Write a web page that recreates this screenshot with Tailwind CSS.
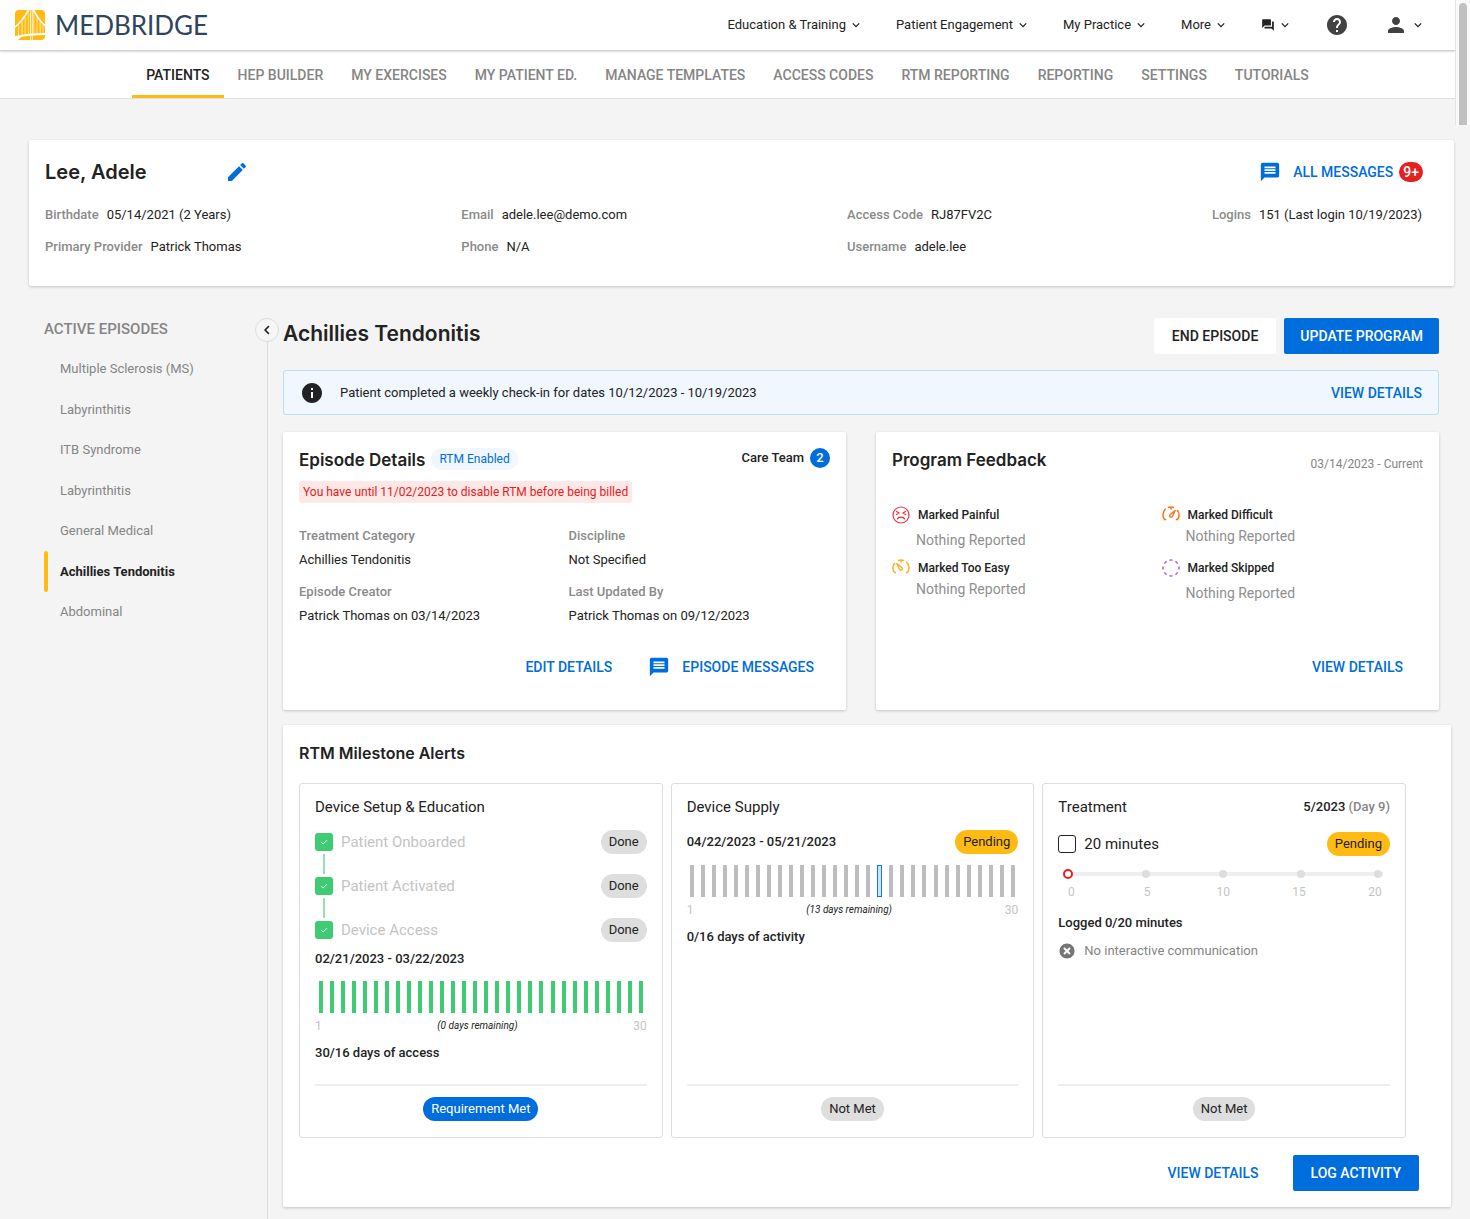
<!DOCTYPE html>
<html lang="en">
<head>
  <meta charset="UTF-8" />
  <meta name="viewport" content="width=device-width, initial-scale=1.0"/>
  <title>MedBridge - Lee, Adele</title>
  <script src="https://cdn.jsdelivr.net/npm/@tailwindcss/browser@4"></script>
</head>
<body class="relative min-h-screen bg-[#f4f4f4] font-[Roboto,sans-serif] text-[13px] text-[#222]">
  <!-- Shared icons -->
  <svg class="hidden">
    <symbol id="chevron" viewBox="0 0 10 10"><path d="M1.8 3.4 5 6.6l3.2-3.2" fill="none" stroke="currentColor" stroke-width="1.3"/></symbol>
    <symbol id="message" viewBox="0 0 24 24"><path fill="currentColor" d="M20 2H4c-1.1 0-2 .9-2 2v18l4-4h14c1.1 0 2-.9 2-2V4c0-1.100-.9-2-2-2zm-2 12H6v-2h12v2zm0-3H6V9h12v2zm0-3H6V6h12v2z"/></symbol>
    <symbol id="check" viewBox="0 0 10 10"><path d="M1.500 5.200 4 7.500 8.700 2.700" fill="none" stroke="#fff" stroke-width="1.200"/></symbol>
  </svg>

  <!-- Scrollbar -->
  <div class="absolute top-0 right-0 h-[125px] w-[15px] border-l border-[#e4e4e4] bg-[#fafafa] pt-[3px] pl-[3px]">
    <div class="h-full w-2 rounded-t-full bg-[#c1c1c1]"></div>
  </div>

  <div class="mr-[15px] bg-white">
    <header class="flex h-[51px] items-center justify-between border-b border-[#cfcfcf] pr-8 pl-[15px] shadow-[0_1px_2px_rgba(0,0,0,0.15)]">
      <a href="#" class="flex items-center gap-[10px] font-[Lato,sans-serif] text-[26px] leading-[30px] text-[#30455c]">
        <svg class="size-[30px]" viewBox="0 0 30 30">
          <path fill="#ffbb12" d="M4 0h22a4 4 0 0 1 4 4v22a4 4 0 0 1-4 4H4a4 4 0 0 1-4-4V4a4 4 0 0 1 4-4z"/>
          <g fill="none" stroke="#fff">
            <path stroke-width="1.600" d="M-.5 17.500C5 13 10 7 13.500-.5M18.500-.5C22 7 25.500 12 30.500 16"/>
            <path stroke-width="2" d="M-.5 27.200C9 25 20 23.900 30.500 23.900"/>
            <path stroke-width=".6" d="M3.500 14.500v11.500M7 11v14.500M10.200 7v18M13.400 1v24M18.800 1v23.500M22 7v17M25.200 11v13M28 14v10"/>
            <path stroke-width=".8" d="M15.500 0v30M17.300 0v30"/>
          </g>
          <path fill="#fff" d="M0 27.500l7-1.200L3 30H0z"/>
        </svg>
        MEDBRIDGE
      </a>
      <nav class="flex items-center gap-[35px]">
        <button class="flex items-center gap-[5px]">Education &amp; Training <svg class="size-[10px]"><use href="#chevron"/></svg></button>
        <button class="flex items-center gap-[5px]">Patient Engagement <svg class="size-[10px]"><use href="#chevron"/></svg></button>
        <button class="flex items-center gap-[5px]">My Practice <svg class="size-[10px]"><use href="#chevron"/></svg></button>
        <button class="flex items-center gap-[5px]">More <svg class="size-[10px]"><use href="#chevron"/></svg></button>
        <button class="flex items-center gap-[5px]" aria-label="Chats">
          <svg class="size-[14px]" viewBox="0 0 24 24"><path fill="#222" d="M21 6h-2v9H6v2c0 .55.45 1 1 1h11l4 4V7c0-.55-.45-1-1-1zm-4 6V3c0-.55-.45-1-1-1H3c-.55 0-1 .45-1 1v14l4-4h10c.55 0 1-.45 1-1z"/></svg>
          <svg class="size-[10px]"><use href="#chevron"/></svg>
        </button>
        <button aria-label="Help">
          <svg class="size-6" viewBox="0 0 24 24"><path fill="#424242" d="M12 2C6.480 2 2 6.480 2 12s4.480 10 10 10 10-4.480 10-10S17.520 2 12 2zm1 17h-2v-2h2v2zm2.070-7.750-.9.920C13.450 12.900 13 13.500 13 15h-2v-.5c0-1.100.45-2.100 1.170-2.830l1.240-1.260c.37-.36.59-.86.59-1.410 0-1.100-.9-2-2-2s-2 .9-2 2H8c0-2.210 1.790-4 4-4s4 1.790 4 4c0 .88-.36 1.680-.93 2.250z"/></svg>
        </button>
        <button class="flex items-center gap-[5px]" aria-label="Account">
          <svg class="size-6" viewBox="0 0 24 24"><path fill="#424242" d="M12 12c2.210 0 4-1.790 4-4s-1.790-4-4-4-4 1.790-4 4 1.790 4 4 4zm0 2c-2.670 0-8 1.340-8 4v2h16v-2c0-2.660-5.330-4-8-4z"/></svg>
          <svg class="size-[10px]"><use href="#chevron"/></svg>
        </button>
      </nav>
    </header>

    <nav class="flex h-12 justify-center border-b border-[#e0e0e0] text-sm font-medium text-[#858585]">
      <a href="#" class="flex items-center border-b-3 border-[#ffbb12] px-[14px] pt-[3px] text-[#222]">PATIENTS</a>
      <a href="#" class="flex items-center px-[14px]">HEP BUILDER</a>
      <a href="#" class="flex items-center px-[14px]">MY EXERCISES</a>
      <a href="#" class="flex items-center px-[14px]">MY PATIENT ED.</a>
      <a href="#" class="flex items-center px-[14px]">MANAGE TEMPLATES</a>
      <a href="#" class="flex items-center px-[14px]">ACCESS CODES</a>
      <a href="#" class="flex items-center px-[14px]">RTM REPORTING</a>
      <a href="#" class="flex items-center px-[14px]">REPORTING</a>
      <a href="#" class="flex items-center px-[14px]">SETTINGS</a>
      <a href="#" class="flex items-center px-[14px]">TUTORIALS</a>
    </nav>
  </div>

  <div class="pt-[41px] pr-4 pl-[29px]">
    <!-- Patient card -->
    <section class="rounded-xs bg-white px-4 pt-4 pb-[27px] shadow-[0_1px_3px_rgba(0,0,0,0.2)]">
      <div class="flex h-8 items-center justify-between pr-[15px]">
        <div class="flex items-center">
          <h1 class="w-[180px] font-[Inter,sans-serif] text-xl font-semibold">Lee, Adele</h1>
          <button aria-label="Edit patient" class="text-[#006ddc]">
            <svg class="size-6" viewBox="0 0 24 24"><path fill="currentColor" d="M3 17.250V21h3.750L17.810 9.940l-3.750-3.750L3 17.250zM20.710 7.040c.39-.39.39-1.020 0-1.410l-2.340-2.340c-.39-.39-1.020-.39-1.410 0l-1.830 1.830 3.750 3.750 1.830-1.830z"/></svg>
          </button>
        </div>
        <a href="#" class="flex items-center text-sm font-medium text-[#006ddc]">
          <svg class="mr-3 size-[22px]"><use href="#message"/></svg>
          ALL MESSAGES
          <span class="ml-[6px] rounded-full bg-[#e52020] px-1 leading-5 text-white">9+</span>
        </a>
      </div>
      <div class="mt-[15px] flex justify-between pr-4 leading-6">
        <div class="flex flex-col gap-2">
          <p><span class="mr-2 font-medium text-[#8a8a8a]">Birthdate</span>05/14/2021 (2 Years)</p>
          <p><span class="mr-2 font-medium text-[#8a8a8a]">Primary Provider</span>Patrick Thomas</p>
        </div>
        <div class="flex flex-col gap-2">
          <p><span class="mr-2 font-medium text-[#8a8a8a]">Email</span>adele.lee@demo.com</p>
          <p><span class="mr-2 font-medium text-[#8a8a8a]">Phone</span>N/A</p>
        </div>
        <div class="flex flex-col gap-2">
          <p><span class="mr-2 font-medium text-[#8a8a8a]">Access Code</span>RJ87FV2C</p>
          <p><span class="mr-2 font-medium text-[#8a8a8a]">Username</span>adele.lee</p>
        </div>
        <div>
          <p><span class="mr-2 font-medium text-[#8a8a8a]">Logins</span>151 (Last login 10/19/2023)</p>
        </div>
      </div>
    </section>

    <div class="mt-8 flex pr-[3px]">
      <!-- Episode list -->
      <aside class="w-[226px] pl-[15px] text-[#858585]">
        <h2 class="text-[15px] leading-[22px] font-medium">ACTIVE EPISODES</h2>
        <ul class="mt-[9px] grid h-[283px] auto-rows-fr">
          <li class="flex items-center pl-4"><a href="#">Multiple Sclerosis (MS)</a></li>
          <li class="flex items-center pl-4"><a href="#">Labyrinthitis</a></li>
          <li class="flex items-center pl-4"><a href="#">ITB Syndrome</a></li>
          <li class="flex items-center pl-4"><a href="#">Labyrinthitis</a></li>
          <li class="flex items-center pl-4"><a href="#">General Medical</a></li>
          <li class="flex items-center gap-3 font-bold text-[#222]"><span class="h-full w-1 rounded-full bg-[#ffbb12]"></span><a href="#">Achillies Tendonitis</a></li>
          <li class="flex items-center pl-4"><a href="#">Abdominal</a></li>
        </ul>
      </aside>
      <div class="flex flex-col items-center">
        <button aria-label="Collapse episodes" class="grid size-6 place-items-center rounded-full border border-[#ddd] bg-[#f6f6f6]">
          <svg class="size-3 rotate-90"><use href="#chevron"/></svg>
        </button>
        <div class="w-px flex-1 bg-[#ddd]"></div>
      </div>

      <main class="min-w-0 flex-1 pb-3 pl-1">
        <div class="mr-3">
          <div class="flex justify-between">
            <h2 class="font-[Inter,sans-serif] text-[21px] leading-8 font-semibold">Achillies Tendonitis</h2>
            <div class="flex gap-2 text-sm font-medium">
              <button class="h-9 rounded-xs bg-white px-[18px]">END EPISODE</button>
              <button class="h-9 rounded-xs bg-[#006ddc] px-4 text-white">UPDATE PROGRAM</button>
            </div>
          </div>

          <div class="mt-4 flex h-[45px] items-center rounded-[3px] border border-[#b8defc] bg-[#f0f7fe] px-4">
            <svg class="mr-4 size-6" viewBox="0 0 24 24"><path fill="#222" d="M12 2C6.480 2 2 6.480 2 12s4.480 10 10 10 10-4.480 10-10S17.520 2 12 2zm1 15h-2v-6h2v6zm0-8h-2V7h2v2z"/></svg>
            <p class="flex-1">Patient completed a weekly check-in for dates 10/12/2023 - 10/19/2023</p>
            <a href="#" class="text-sm font-medium text-[#006ddc]">VIEW DETAILS</a>
          </div>

          <div class="mt-[17px] grid grid-cols-2 gap-[30px]">
            <section class="rounded-xs bg-white px-4 pt-4 pb-[25px] shadow-[0_1px_3px_rgba(0,0,0,0.2)]">
              <div class="flex h-6 items-start justify-between">
                <div class="flex gap-[6px]">
                  <h3 class="font-[Inter,sans-serif] text-[17px] leading-6 font-semibold">Episode Details</h3>
                  <span class="h-[22px] rounded-full bg-[#f0f7fe] px-2 text-xs leading-[22px] text-[#006ddc]">RTM Enabled</span>
                </div>
                <div class="flex items-center gap-[6px] font-medium">Care Team <span class="size-5 rounded-full bg-[#006ddc] text-center leading-5 text-white">2</span></div>
              </div>
              <p class="mt-[9px] w-fit rounded-[3px] bg-[#fce8e7] px-1 text-xs leading-[22px] text-[#e52020]">You have until 11/02/2023 to disable RTM before being billed</p>
              <dl class="mt-[21px] grid grid-cols-2 gap-2 leading-6">
                <div><dt class="font-medium text-[#8a8a8a]">Treatment Category</dt><dd>Achillies Tendonitis</dd></div>
                <div><dt class="font-medium text-[#8a8a8a]">Discipline</dt><dd>Not Specified</dd></div>
                <div><dt class="font-medium text-[#8a8a8a]">Episode Creator</dt><dd>Patrick Thomas on 03/14/2023</dd></div>
                <div><dt class="font-medium text-[#8a8a8a]">Last Updated By</dt><dd>Patrick Thomas on 09/12/2023</dd></div>
              </dl>
              <div class="mt-[21px] flex h-9 items-center justify-end gap-9 pr-4 text-sm font-medium text-[#006ddc]">
                <a href="#">EDIT DETAILS</a>
                <a href="#" class="flex items-center gap-3"><svg class="size-[22px]"><use href="#message"/></svg>EPISODE MESSAGES</a>
              </div>
            </section>

            <section class="flex flex-col rounded-xs bg-white px-4 pt-4 pb-[25px] shadow-[0_1px_3px_rgba(0,0,0,0.2)]">
              <div class="flex h-6 justify-between">
                <h3 class="font-[Inter,sans-serif] text-[17px] leading-6 font-semibold">Program Feedback</h3>
                <span class="text-xs leading-8 text-[#858585]">03/14/2023 - Current</span>
              </div>
              <div class="mt-[33px] grid grid-cols-2 gap-x-2 gap-y-[7px]">
                <div>
                  <h4 class="flex items-center gap-2 text-xs leading-5 font-medium">
                    <svg class="size-[18px]" viewBox="0 0 18 18" fill="none" stroke="#e8353b" stroke-width="1.200" stroke-linecap="round"><circle cx="9" cy="9" r="8"/><path d="M4.500 5.500 7 7 4.500 8.500M13.500 5.500 11 7l2.500 1.500M5.500 13c.8-2.600 6.200-2.600 7 0"/></svg>
                    Marked Painful
                  </h4>
                  <p class="mt-1 pl-6 text-sm leading-[22px] text-[#8f8f8f]">Nothing Reported</p>
                </div>
                <div>
                  <h4 class="flex items-center gap-2 text-xs leading-5 font-medium">
                    <svg class="size-[18px]" viewBox="0 0 18 18" fill="none" stroke="#f5761a" stroke-width="1.500"><path d="M2.600 13.600A8 8 0 0 1 3.800 2.800M5.800 1.600A8 8 0 0 1 12.200 1.600M15.200 4A8 8 0 0 1 15.400 13.600M9 1v2.600M2 13.600h2.200M13.800 13.600H16"/><path stroke-width="1.400" d="M13.400 4.200 8.200 8.600a1.500 1.500 0 1 0 2.100 2.100z"/></svg>
                    Marked Difficult
                  </h4>
                  <p class="pl-6 text-sm leading-[22px] text-[#8f8f8f]">Nothing Reported</p>
                </div>
                <div>
                  <h4 class="flex items-center gap-2 text-xs leading-5 font-medium">
                    <svg class="size-[18px]" viewBox="0 0 18 18" fill="none" stroke="#fbb224" stroke-width="1.500"><path d="M2.600 13.600A8 8 0 0 1 2.800 4M5.800 1.600A8 8 0 0 1 12.200 1.600M14.200 2.800A8 8 0 0 1 15.400 13.600M9 1v2.600M2 13.600h2.200M13.800 13.600H16"/><path stroke-width="1.400" d="M4.600 4.200 9.800 8.600a1.500 1.500 0 1 1-2.100 2.100z"/></svg>
                    Marked Too Easy
                  </h4>
                  <p class="pl-6 text-sm leading-[22px] text-[#8f8f8f]">Nothing Reported</p>
                </div>
                <div>
                  <h4 class="flex items-center gap-2 text-xs leading-5 font-medium">
                    <svg class="size-[18px]" viewBox="0 0 18 18" fill="none" stroke="#b964cf" stroke-width="1.500"><circle cx="9" cy="9" r="8" pathLength="80" stroke-dasharray="5 5" stroke-dashoffset="2.500"/></svg>
                    Marked Skipped
                  </h4>
                  <p class="mt-1 pl-6 text-sm leading-[22px] text-[#8f8f8f]">Nothing Reported</p>
                </div>
              </div>
              <div class="mt-auto flex h-9 items-center justify-end pr-5 text-sm font-medium text-[#006ddc]"><a href="#">VIEW DETAILS</a></div>
            </section>
          </div>
        </div>

        <!-- Milestones -->
        <section class="mt-[15px] rounded-xs bg-white p-4 shadow-[0_1px_3px_rgba(0,0,0,0.2)]">
          <h3 class="font-[Inter,sans-serif] text-base leading-6 font-semibold">RTM Milestone Alerts</h3>
          <div class="mt-[18px] mr-[29px] grid grid-cols-3 gap-2">
            <div class="flex flex-col rounded-[3px] border border-[#ddd] px-[15px] pt-3 pb-4">
              <h4 class="text-[15px] leading-[22px]">Device Setup &amp; Education</h4>
              <div class="mt-3 text-[15px] text-[#c4c4c4]">
                <div class="flex h-6 items-center">
                  <span class="mr-2 grid place-items-center">
                    <input id="onboarded" type="checkbox" checked class="size-[18px] appearance-none rounded-[3px] bg-[#3fcb73] [grid-area:1/1]" />
                    <svg class="pointer-events-none size-2 [grid-area:1/1]"><use href="#check"/></svg>
                  </span>
                  <label for="onboarded" class="flex-1">Patient Onboarded</label>
                  <span class="rounded-full bg-[#dedede] px-2 text-[13px] leading-6 text-[#222]">Done</span>
                </div>
                <div class="ml-2 h-5 w-[2px] bg-[#95dfb0]"></div>
                <div class="flex h-6 items-center">
                  <span class="mr-2 grid place-items-center">
                    <input id="activated" type="checkbox" checked class="size-[18px] appearance-none rounded-[3px] bg-[#3fcb73] [grid-area:1/1]" />
                    <svg class="pointer-events-none size-2 [grid-area:1/1]"><use href="#check"/></svg>
                  </span>
                  <label for="activated" class="flex-1">Patient Activated</label>
                  <span class="rounded-full bg-[#dedede] px-2 text-[13px] leading-6 text-[#222]">Done</span>
                </div>
                <div class="ml-2 h-5 w-[2px] bg-[#95dfb0]"></div>
                <div class="flex h-6 items-center">
                  <span class="mr-2 grid place-items-center">
                    <input id="access" type="checkbox" checked class="size-[18px] appearance-none rounded-[3px] bg-[#3fcb73] [grid-area:1/1]" />
                    <svg class="pointer-events-none size-2 [grid-area:1/1]"><use href="#check"/></svg>
                  </span>
                  <label for="access" class="flex-1">Device Access</label>
                  <span class="rounded-full bg-[#dedede] px-2 text-[13px] leading-6 text-[#222]">Done</span>
                </div>
              </div>
              <p class="mt-[6px] leading-[22px] font-medium">02/21/2023 - 03/22/2023</p>
              <div id="accessBars" class="mt-[11px] flex h-8 justify-around"></div>
              <div class="mt-[5px] flex justify-between text-xs leading-4 text-[#c4c4c4]"><span>1</span><i class="text-[10px] text-[#222]">(0 days remaining)</i><span>30</span></div>
              <p class="mt-2 leading-[22px] font-medium">30/16 days of access</p>
              <div class="mt-5 flex justify-center border-t-2 border-[#eee] pt-[11px]"><span class="rounded-full bg-[#006ddc] px-2 leading-6 text-white">Requirement Met</span></div>
            </div>

            <div class="flex flex-col rounded-[3px] border border-[#ddd] px-[15px] pt-3 pb-4">
              <h4 class="text-[15px] leading-[22px]">Device Supply</h4>
              <div class="mt-3 flex justify-between leading-6">
                <p class="font-medium">04/22/2023 - 05/21/2023</p>
                <span class="rounded-full bg-[#ffbb12] px-2">Pending</span>
              </div>
              <div id="supplyBars" class="mt-[11px] flex h-8 justify-around"></div>
              <div class="mt-[5px] flex justify-between text-xs leading-4 text-[#c4c4c4]"><span>1</span><i class="text-[10px] text-[#222]">(13 days remaining)</i><span>30</span></div>
              <p class="mt-2 leading-[22px] font-medium">0/16 days of activity</p>
              <div class="mt-auto flex justify-center border-t-2 border-[#eee] pt-[11px]"><span class="rounded-full bg-[#dedede] px-2 leading-6">Not Met</span></div>
            </div>

            <div class="flex flex-col rounded-[3px] border border-[#ddd] px-[15px] pt-3 pb-4">
              <div class="flex justify-between leading-[22px]">
                <h4 class="text-[15px] leading-[22px]">Treatment</h4>
                <p class="font-medium">5/2023 <span class="text-[#858585]">(Day 9)</span></p>
              </div>
              <div class="mt-[14px] flex items-center leading-6">
                <input id="minutes" type="checkbox" class="mr-2 size-[18px] appearance-none rounded-[3px] border border-[#222]" />
                <label for="minutes" class="flex-1 text-[15px]">20 minutes</label>
                <span class="rounded-full bg-[#ffbb12] px-2">Pending</span>
              </div>
              <div class="relative mt-[10px] mr-[7px] ml-[5px] flex h-4 items-center">
                <div class="h-1 flex-1 bg-[#eee]"></div>
                <div class="absolute inset-0 flex items-center justify-between px-px">
                  <span class="size-2 rounded-full bg-[#dedede]"></span>
                  <span class="size-2 rounded-full bg-[#dedede]"></span>
                  <span class="size-2 rounded-full bg-[#dedede]"></span>
                  <span class="size-2 rounded-full bg-[#dedede]"></span>
                  <span class="size-2 rounded-full bg-[#dedede]"></span>
                </div>
                <input type="range" min="0" max="20" value="0" aria-label="Minutes logged" class="absolute inset-0 w-full appearance-none bg-transparent [&::-webkit-slider-thumb]:size-[10px] [&::-webkit-slider-thumb]:appearance-none [&::-webkit-slider-thumb]:rounded-full [&::-webkit-slider-thumb]:border-2 [&::-webkit-slider-thumb]:border-solid [&::-webkit-slider-thumb]:border-[#e52020] [&::-webkit-slider-thumb]:bg-white" />
              </div>
              <div class="mt-[2px] mr-[7px] ml-[5px] flex justify-between text-center text-xs leading-4 text-[#c4c4c4]">
                <span class="w-4">0</span><span class="w-4">5</span><span class="w-4">10</span><span class="w-4">15</span><span class="w-4">20</span>
              </div>
              <p class="mt-3 leading-[22px] font-medium">Logged 0/20 minutes</p>
              <p class="mt-[6px] flex items-center gap-2 leading-[22px] text-[#858585]">
                <svg class="size-[18px]" viewBox="0 0 24 24"><path fill="#757575" d="M12 2C6.470 2 2 6.470 2 12s4.470 10 10 10 10-4.470 10-10S17.530 2 12 2z"/><path stroke="#fff" stroke-width="2.600" d="m8 8 8 8m0-8-8 8"/></svg>
                No interactive communication
              </p>
              <div class="mt-auto flex justify-center border-t-2 border-[#eee] pt-[11px]"><span class="rounded-full bg-[#dedede] px-2 leading-6">Not Met</span></div>
            </div>
          </div>
          <div class="mt-[17px] flex justify-end gap-4 pr-4 text-sm font-medium">
            <button class="h-9 px-[18px] text-[#006ddc]">VIEW DETAILS</button>
            <button class="h-9 rounded-xs bg-[#006ddc] px-[18px] text-white">LOG ACTIVITY</button>
          </div>
        </section>
      </main>
    </div>
  </div>

  <script>
    // One bar per day of the 30 day period
    function drawBars(id, barClass, today) {
      const box = document.getElementById(id);
      for (let day = 1; day <= 30; day++) {
        const bar = document.createElement("span");
        bar.className = day === today ? "w-[5px] border border-[#1a75dd] bg-[#cfe3f8]" : barClass;
        box.appendChild(bar);
      }
    }

    drawBars("accessBars", "w-1 bg-[#3fcb73]");
    drawBars("supplyBars", "w-1 bg-[#bdbdbd]", 18);
  </script>
</body>
</html>
